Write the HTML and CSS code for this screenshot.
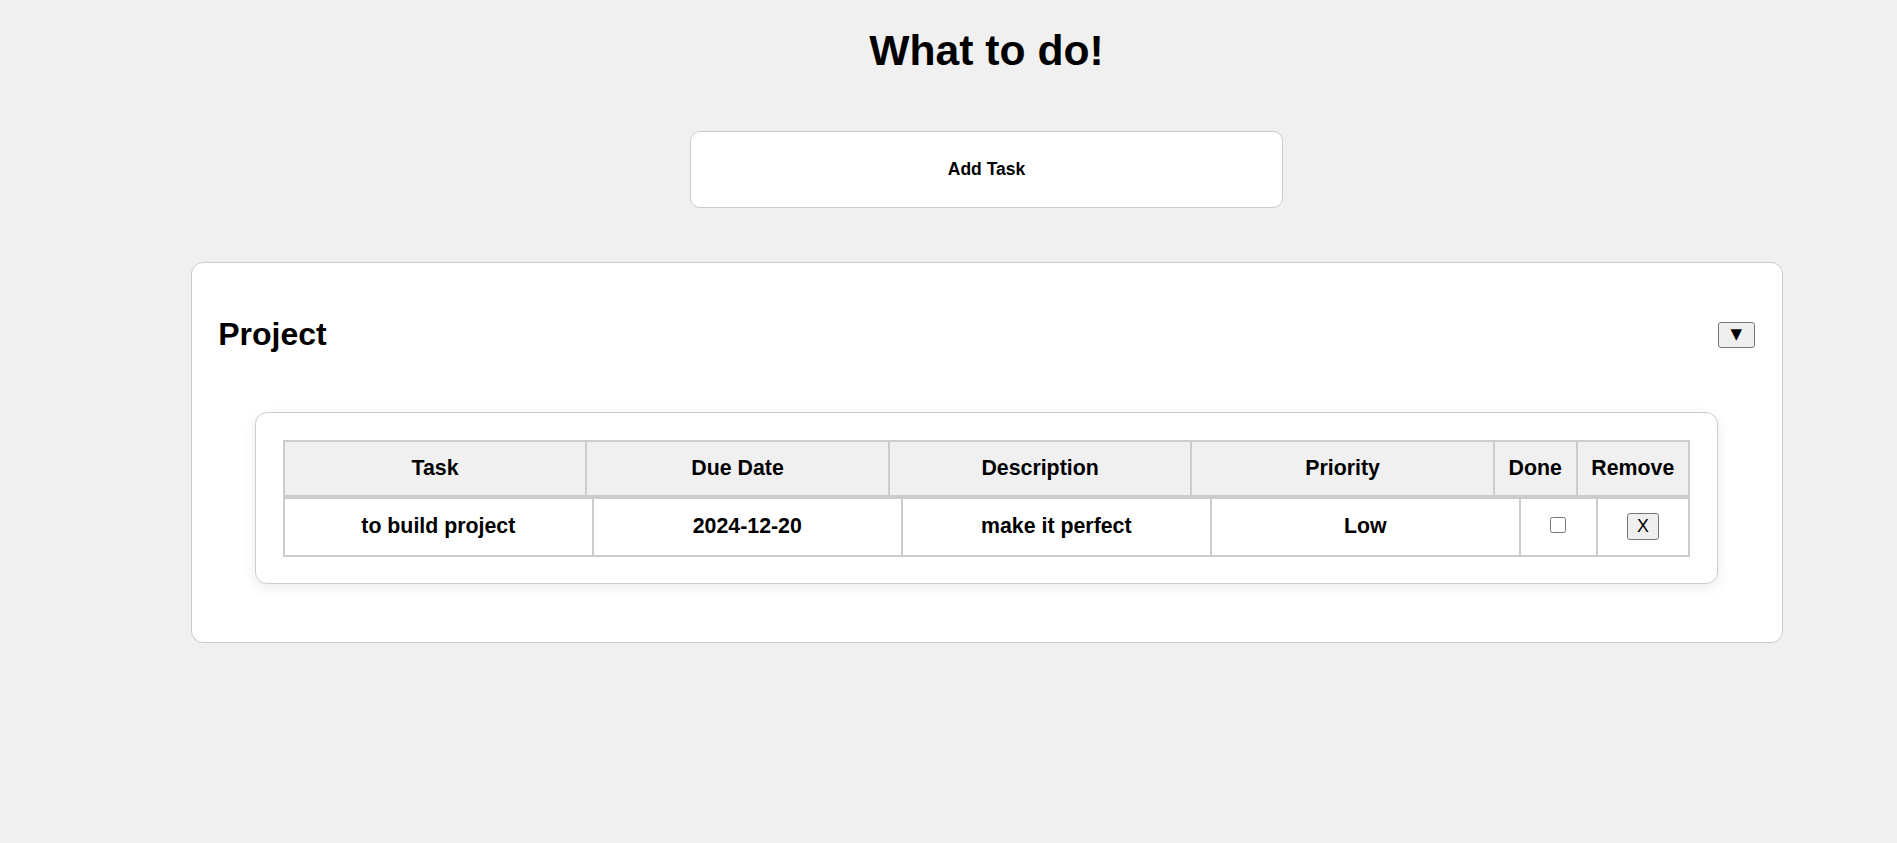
FILE: index.html
```html
<!DOCTYPE html>
<html lang="en">
<head>
<meta charset="utf-8">
<title>What to do!</title>
<link rel="stylesheet" href="styles.css">
</head>
<body>
<div class="page">
  <h1 class="title">What to do!</h1>
  <button class="add-btn" type="button">Add Task</button>
  <section class="project">
    <div class="project-head">
      <h2 class="project-title">Project</h2>
      <button class="toggle-btn" type="button">▼</button>
    </div>
    <div class="table-card">
      <table class="tasks">
        <thead>
          <tr>
            <th>Task</th>
            <th>Due Date</th>
            <th>Description</th>
            <th>Priority</th>
            <th>Done</th>
            <th>Remove</th>
          </tr>
        </thead>
        <tbody>
          <tr>
            <td>to build project</td>
            <td>2024-12-20</td>
            <td>make it perfect</td>
            <td>Low</td>
            <td><input class="done-check" type="checkbox"></td>
            <td><button class="remove-btn" type="button">X</button></td>
          </tr>
        </tbody>
      </table>
    </div>
  </section>
</div>
</body>
</html>
```
FILE: styles.css
```css
body {
  margin: 0;
  background: #f0f0f0;
  color: #000;
  font-family: "Liberation Sans", Arial, sans-serif;
}

.page {
  margin-left: 76px;
  display: flex;
  flex-direction: column;
  align-items: center;
}

.title {
  font-size: 42.67px;
  line-height: 49px;
  font-weight: bold;
  margin: 26px 0 56px;
}

.add-btn {
  width: 593px;
  height: 77px;
  background: #fff;
  border: 1px solid #cccccc;
  border-radius: 10px;
  font-family: "Liberation Sans", Arial, sans-serif;
  font-size: 17.5px;
  font-weight: bold;
  color: #000;
  padding: 0;
}

.project {
  width: 1592px;
  box-sizing: border-box;
  margin-top: 54px;
  background: #fff;
  border: 1px solid #cccccc;
  border-radius: 12px;
  padding: 26.67px;
}

.project-head {
  display: flex;
  justify-content: space-between;
  align-items: center;
}

.project-title {
  font-size: 32px;
  line-height: 36.8px;
  font-weight: bold;
  margin: 26.6px 0;
}

.toggle-btn {
  width: 37px;
  height: 26px;
  padding: 0;
  background: #efefef;
  border: 1px solid #767676;
  border-radius: 3px;
  color: #000;
  font-family: "DejaVu Sans", sans-serif;
  font-size: 15px;
  line-height: 1;
  display: flex;
  align-items: center;
  justify-content: center;
}

.table-card {
  margin: 32.6px 37px 31.3px;
  background: #fff;
  border: 1px solid #cccccc;
  border-radius: 12px;
  padding: 26.67px;
  box-shadow: 0 4px 14px rgba(0, 0, 0, 0.08);
}

.tasks {
  display: block;
  width: 100%;
}

.tasks thead,
.tasks tbody {
  display: block;
}

.tasks tr {
  display: grid;
  gap: 2px;
  background: #cccccc;
  border: 2px solid #cccccc;
}

.tasks thead tr {
  grid-template-columns: 1fr 1fr 1fr 1fr 80.7px 110.7px;
}

.tasks tbody tr {
  grid-template-columns: 1fr 1fr 1fr 1fr 75px 90.4px;
}

.tasks th,
.tasks td {
  display: flex;
  align-items: center;
  justify-content: center;
  padding: 0;
  font-size: 21.33px;
  font-weight: bold;
  white-space: nowrap;
}

.tasks th {
  background: #f0f0f0;
  height: 52.7px;
}

.tasks td {
  background: #fff;
  height: 56px;
}

.done-check {
  width: 16px;
  height: 16px;
  margin: 0 0 4px;
}

.remove-btn {
  height: 26.4px;
  padding: 0 9px;
  background: #efefef;
  border: 1px solid #767676;
  border-radius: 3px;
  color: #000;
  font-family: "Liberation Sans", Arial, sans-serif;
  font-size: 17.8px;
  font-weight: normal;
}
```
